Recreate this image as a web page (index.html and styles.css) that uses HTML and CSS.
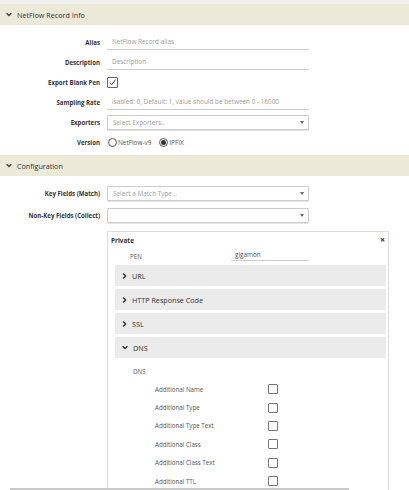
FILE: index.html
```html
<!DOCTYPE html>
<html>
<head>
<meta charset="utf-8">
<link rel="stylesheet" href="styles.css">
</head>
<body>
<div class="topstrip"></div>
<div class="sec-head">
  <svg class="chev-down" width="6" height="5" viewBox="0 0 6 5"><path d="M0.6 1.2 L3 3.6 L5.4 1.2" fill="none" stroke="#444" stroke-width="1.4"/></svg>
  <span>NetFlow Record Info</span>
</div>
<div class="form form-info">
  <div class="label">Alias</div>
  <div class="uinput">NetFlow Record alias</div>
  <div class="label">Description</div>
  <div class="uinput">Description</div>
  <div class="label">Export Blank Pen</div>
  <div class="field"><span class="check checked"><svg width="9" height="9" viewBox="0 0 9 9"><path d="M1.8 4.6 L3.7 6.6 L7.6 1.6" fill="none" stroke="#444" stroke-width="1"/></svg></span></div>
  <div class="label">Sampling Rate</div>
  <div class="uinput">isabled: 0, Default: 1, value should be between 0 - 16000</div>
  <div class="label">Exporters</div>
  <div class="select"><span>Select Exporters..</span><span class="caret"></span></div>
  <div class="label">Version</div>
  <div class="field radios">
    <span class="radio"></span><span class="rtext">NetFlow-v9</span>
    <span class="radio on"></span><span class="rtext">IPFIX</span>
  </div>
</div>
<div class="sec-head">
  <svg class="chev-down" width="6" height="5" viewBox="0 0 6 5"><path d="M0.6 1.2 L3 3.6 L5.4 1.2" fill="none" stroke="#444" stroke-width="1.4"/></svg>
  <span>Configuration</span>
</div>
<div class="form form-config">
  <div class="label">Key Fields (Match)</div>
  <div class="select"><span>Select a Match Type ..</span><span class="caret"></span></div>
  <div class="label">Non-Key Fields (Collect)</div>
  <div class="select"><span></span><span class="caret"></span></div>
</div>
<div class="panel">
  <div class="panel-head"><span>Private</span><span class="close">&#10006;</span></div>
  <div class="pen-row">
    <span class="pen-label">PEN</span>
    <span class="pen-input">gigamon</span>
  </div>
  <div class="bar"><svg width="5" height="6" viewBox="0 0 5 6"><path d="M1.2 0.6 L3.6 3 L1.2 5.4" fill="none" stroke="#333" stroke-width="1.4"/></svg><span>URL</span></div>
  <div class="bar"><svg width="5" height="6" viewBox="0 0 5 6"><path d="M1.2 0.6 L3.6 3 L1.2 5.4" fill="none" stroke="#333" stroke-width="1.4"/></svg><span>HTTP Response Code</span></div>
  <div class="bar"><svg width="5" height="6" viewBox="0 0 5 6"><path d="M1.2 0.6 L3.6 3 L1.2 5.4" fill="none" stroke="#333" stroke-width="1.4"/></svg><span>SSL</span></div>
  <div class="bar"><svg width="6" height="5" viewBox="0 0 6 5"><path d="M0.6 1.2 L3 3.6 L5.4 1.2" fill="none" stroke="#333" stroke-width="1.4"/></svg><span>DNS</span></div>
  <div class="sub-title">DNS</div>
  <div class="opts">
    <span class="opt">Additional Name</span><span class="check"></span>
    <span class="opt">Additional Type</span><span class="check"></span>
    <span class="opt">Additional Type Text</span><span class="check"></span>
    <span class="opt">Additional Class</span><span class="check"></span>
    <span class="opt">Additional Class Text</span><span class="check"></span>
    <span class="opt">Additional TTL</span><span class="check"></span>
  </div>
</div>
<div class="hscroll"></div>
</body>
</html>
```
FILE: styles.css
```css
html, body {
  margin: 0;
  padding: 0;
}
body {
  font-family: "Open Sans", "DejaVu Sans", sans-serif;
  color: #333;
  background: #fff;
  width: 409px;
  height: 490px;
  overflow: hidden;
  position: relative;
}
.topstrip {
  height: 4px;
  background: #f1f1f1;
}
.sec-head {
  height: 21px;
  background: #ede9d9;
  display: flex;
  align-items: center;
  padding-left: 6px;
  gap: 5px;
  font-size: 7.2px;
  color: #333;
}
.form {
  display: grid;
  grid-template-columns: 100px 202px;
  column-gap: 7px;
  align-items: center;
}
.form-info {
  grid-auto-rows: 20px;
  padding: 7px 0 3px;
}
.form-config {
  grid-auto-rows: 22px;
  padding: 6px 0 5px;
}
.label {
  text-align: right;
  font-weight: 700;
  font-size: 6.1px;
  color: #333;
}
.uinput {
  border-bottom: 1px solid #ccc;
  font-size: 6.4px;
  color: #a0a0a0;
  padding: 2px 0 3px 5px;
  white-space: nowrap;
  overflow: hidden;
}
.field {
  display: flex;
  align-items: center;
}
.check {
  width: 8px;
  height: 8px;
  border: 1px solid #777;
  border-radius: 1px;
  display: inline-flex;
  align-items: center;
  justify-content: center;
  background: #fff;
}
.check.checked {
  width: 9px;
  height: 9px;
  border-color: #666;
}
.select {
  height: 13px;
  border: 1px solid #ccc;
  box-shadow: 0 1px 0 #e4e4e4;
  display: flex;
  align-items: center;
  justify-content: space-between;
  padding: 0 4px 0 5px;
  font-size: 6.4px;
  color: #a0a0a0;
  border-radius: 1px;
}
.caret {
  width: 0;
  height: 0;
  border-left: 2.5px solid transparent;
  border-right: 2.5px solid transparent;
  border-top: 3px solid #666;
}
.radios {
  gap: 0;
}
.radio {
  width: 7px;
  height: 7px;
  border: 1px solid #555;
  border-radius: 50%;
  display: inline-flex;
  align-items: center;
  justify-content: center;
  margin-left: 1px;
}
.radio.on::after {
  content: "";
  width: 5px;
  height: 5px;
  border-radius: 50%;
  background: #333;
}
.rtext {
  font-size: 6.4px;
  color: #555;
  margin-left: 1px;
  margin-right: 7px;
}
.panel {
  box-sizing: border-box;
  margin-left: 107px;
  width: 282px;
  border: 1px solid #ddd;
  border-bottom: none;
  height: 300px;
  padding: 0 2px 0 7px;
}
.panel-head {
  height: 16px;
  display: flex;
  align-items: center;
  justify-content: space-between;
  margin-left: -4px;
  font-size: 6.4px;
  font-weight: 700;
  color: #333;
  padding-right: 1px;
}
.close {
  font-size: 6px;
  color: #555;
  font-weight: 400;
}
.pen-row {
  height: 17px;
  display: flex;
  align-items: center;
}
.pen-label {
  font-size: 6.2px;
  color: #555;
  margin-left: 15px;
  width: 101px;
}
.pen-input {
  width: 74px;
  border-bottom: 1px solid #ccc;
  font-size: 6.4px;
  color: #555;
  padding: 0 0 1px 4px;
  margin-bottom: 2px;
}
.bar {
  height: 21px;
  background: #ebebeb;
  margin-bottom: 3px;
  display: flex;
  align-items: center;
  gap: 5px;
  padding-left: 7px;
  font-size: 7.2px;
  color: #333;
  border-radius: 1px;
}
.sub-title {
  font-size: 6.2px;
  color: #555;
  padding: 6px 0 0 18px;
  height: 13px;
}
.opts {
  display: grid;
  grid-template-columns: 113px 10px;
  grid-auto-rows: 18.4px;
  align-items: center;
  padding-left: 40px;
}
.opt {
  font-size: 6.2px;
  color: #555;
}
.hscroll {
  position: absolute;
  left: 10px;
  bottom: 0;
  width: 339px;
  height: 2px;
  background: #c9c9c9;
}
```
